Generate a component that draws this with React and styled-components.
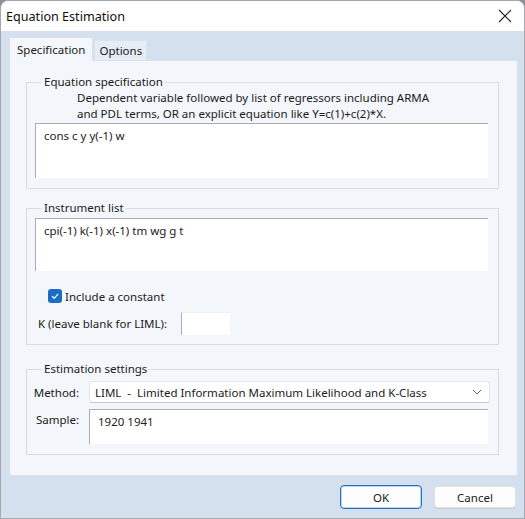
import React from "react";
import styled, { createGlobalStyle } from "styled-components";

const Global = createGlobalStyle`
  html, body {
    margin: 0;
    padding: 0;
    background: #8c8f94;
  }
  * { box-sizing: border-box; }
`;

const Window = styled.div`
  width: 525px;
  height: 519px;
  display: flex;
  flex-direction: column;
  border: 1px solid #a4a9b0;
  border-radius: 8px 8px 0 0;
  overflow: hidden;
  background: #d5e0ee;
  font-family: "Segoe UI", "Noto Sans", sans-serif;
  font-size: 11.5px;
  color: #1a1a1a;
`;

const TitleBar = styled.div`
  height: 30px;
  flex: none;
  display: flex;
  align-items: center;
  justify-content: space-between;
  padding: 0 11px 0 5px;
  background: #fff;
  font-size: 12.6px;
  color: #111;
`;

const CloseBtn = styled.svg`
  width: 16px;
  height: 16px;
`;

const Body = styled.div`
  flex: 1;
  display: flex;
  flex-direction: column;
  padding: 6px 6px 0 8px;
`;

const TabStrip = styled.div`
  display: flex;
  align-items: flex-end;
  height: 23px;
`;

const Tab = styled.div`
  height: ${(p) => (p.active ? "24px" : "20px")};
  padding: 0 ${(p) => (p.active ? "7px" : "4px")};
  display: flex;
  align-items: center;
  background: ${(p) => (p.active ? "#f3f6fa" : "#e7edf5")};
  border: 1px solid #dbe2ec;
  border-bottom: none;
  margin-right: 1px;
  position: relative;
  z-index: ${(p) => (p.active ? 1 : 0)};
  margin-bottom: ${(p) => (p.active ? "-1px" : "0")};
`;

const Panel = styled.div`
  height: 416px;
  background: #f3f6fa;
  border: 1px solid #dbe2ec;
  padding: 0 18px 0 16px;
`;

const Group = styled.fieldset`
  margin: ${(p) => p.top}px 0 0 0;
  padding: 0 10px ${(p) => p.bottom}px 8px;
  border: 1px solid #d9dde3;
  min-width: 0;
`;

const Legend = styled.legend`
  padding: 0 2px;
  margin-left: 7px;
  line-height: 16px;
`;

const Note = styled.div`
  padding-left: 42px;
  line-height: 16px;
`;

const Box = styled.div`
  height: ${(p) => p.h}px;
  margin-top: ${(p) => p.mt || 0}px;
  background: #fff;
  border-top: 1px solid #a9adb3;
  border-left: 1px solid #a9adb3;
  padding: 4px 8px;
  line-height: 16px;
  color: #222;
`;

const CheckRow = styled.label`
  display: flex;
  align-items: center;
  gap: 3px;
  height: 20px;
  margin: 15px 0 0 13px;
`;

const Check = styled.span`
  width: 14px;
  height: 14px;
  border-radius: 3px;
  background: #1a6cc7;
  display: flex;
  align-items: center;
  justify-content: center;
`;

const KRow = styled.div`
  display: flex;
  align-items: center;
  gap: 14px;
  margin: 6px 0 0 3px;
`;

const SmallInput = styled.div`
  width: 49px;
  height: 23px;
  background: #fff;
  border-left: 1px solid #a9adb3;
  border-top: 1px solid #eceef1;
`;

const Grid = styled.div`
  display: grid;
  grid-template-columns: 44px 1fr;
  column-gap: 10px;
  row-gap: 6px;
  margin-top: 4px;
`;

const Label = styled.div`
  justify-self: end;
  align-self: ${(p) => (p.top ? "start" : "center")};
  padding-top: ${(p) => (p.top ? "3px" : "0")};
`;

const Select = styled.div`
  height: 22px;
  margin-right: -2px;
  background: #fff;
  border: 1px solid #e3e5e8;
  border-bottom-color: #c4c7cc;
  border-radius: 3px;
  display: flex;
  align-items: center;
  justify-content: space-between;
  padding: 0 7px 0 5px;
`;

const Footer = styled.div`
  display: flex;
  justify-content: flex-end;
  gap: 12px;
  padding: 9px 2px 0 0;
`;

const Button = styled.button`
  width: 82px;
  height: ${(p) => (p.primary ? "24px" : "22px")};
  margin-top: ${(p) => (p.primary ? "0" : "1px")};
  background: #fdfdfd;
  border: ${(p) => (p.primary ? "1px solid #2a6fc0" : "1px solid #e1e3e6")};
  box-shadow: ${(p) => (p.primary ? "inset 0 0 0 1px #bcd3ee" : "0 1px 0 #c9ccd1")};
  border-radius: 4px;
  font: inherit;
  color: #1a1a1a;
`;

export default function App() {
  return (
    <>
      <Global />
      <Window>
        <TitleBar>
          <span>Equation Estimation</span>
          <CloseBtn viewBox="0 0 16 16">
            <path d="M2 2 L14 14 M14 2 L2 14" stroke="#222" strokeWidth="1.1" />
          </CloseBtn>
        </TitleBar>
        <Body>
          <TabStrip>
            <Tab active>Specification</Tab>
            <Tab>Options</Tab>
          </TabStrip>
          <Panel>
            <Group top={13} bottom={10}>
              <Legend>Equation specification</Legend>
              <Note>
                Dependent variable followed by list of regressors including ARMA
                <br />
                and PDL terms, OR an explicit equation like Y=c(1)+c(2)*X.
              </Note>
              <Box h={55} mt={1}>cons c y y(-1) w</Box>
            </Group>
            <Group top={11} bottom={9}>
              <Legend>Instrument list</Legend>
              <Box h={53} mt={2}>cpi(-1) k(-1) x(-1) tm wg g t</Box>
              <CheckRow>
                <Check>
                  <svg width="10" height="10" viewBox="0 0 10 10">
                    <path d="M2 5.2 L4.2 7.3 L8.2 2.8" stroke="#fff" strokeWidth="1.2" fill="none" />
                  </svg>
                </Check>
                Include a constant
              </CheckRow>
              <KRow>
                <span>K (leave blank for LIML):</span>
                <SmallInput />
              </KRow>
            </Group>
            <Group top={16} bottom={10}>
              <Legend>Estimation settings</Legend>
              <Grid>
                <Label>Method:</Label>
                <Select>
                  <span>LIML&nbsp; - &nbsp;Limited Information Maximum Likelihood and K-Class</span>
                  <svg width="10" height="6" viewBox="0 0 10 6">
                    <path d="M1 1 L5 5 L9 1" stroke="#666" strokeWidth="1" fill="none" />
                  </svg>
                </Select>
                <Label top>Sample:</Label>
                <Box h={35}>1920 1941</Box>
              </Grid>
            </Group>
          </Panel>
          <Footer>
            <Button primary>OK</Button>
            <Button>Cancel</Button>
          </Footer>
        </Body>
      </Window>
    </>
  );
}
